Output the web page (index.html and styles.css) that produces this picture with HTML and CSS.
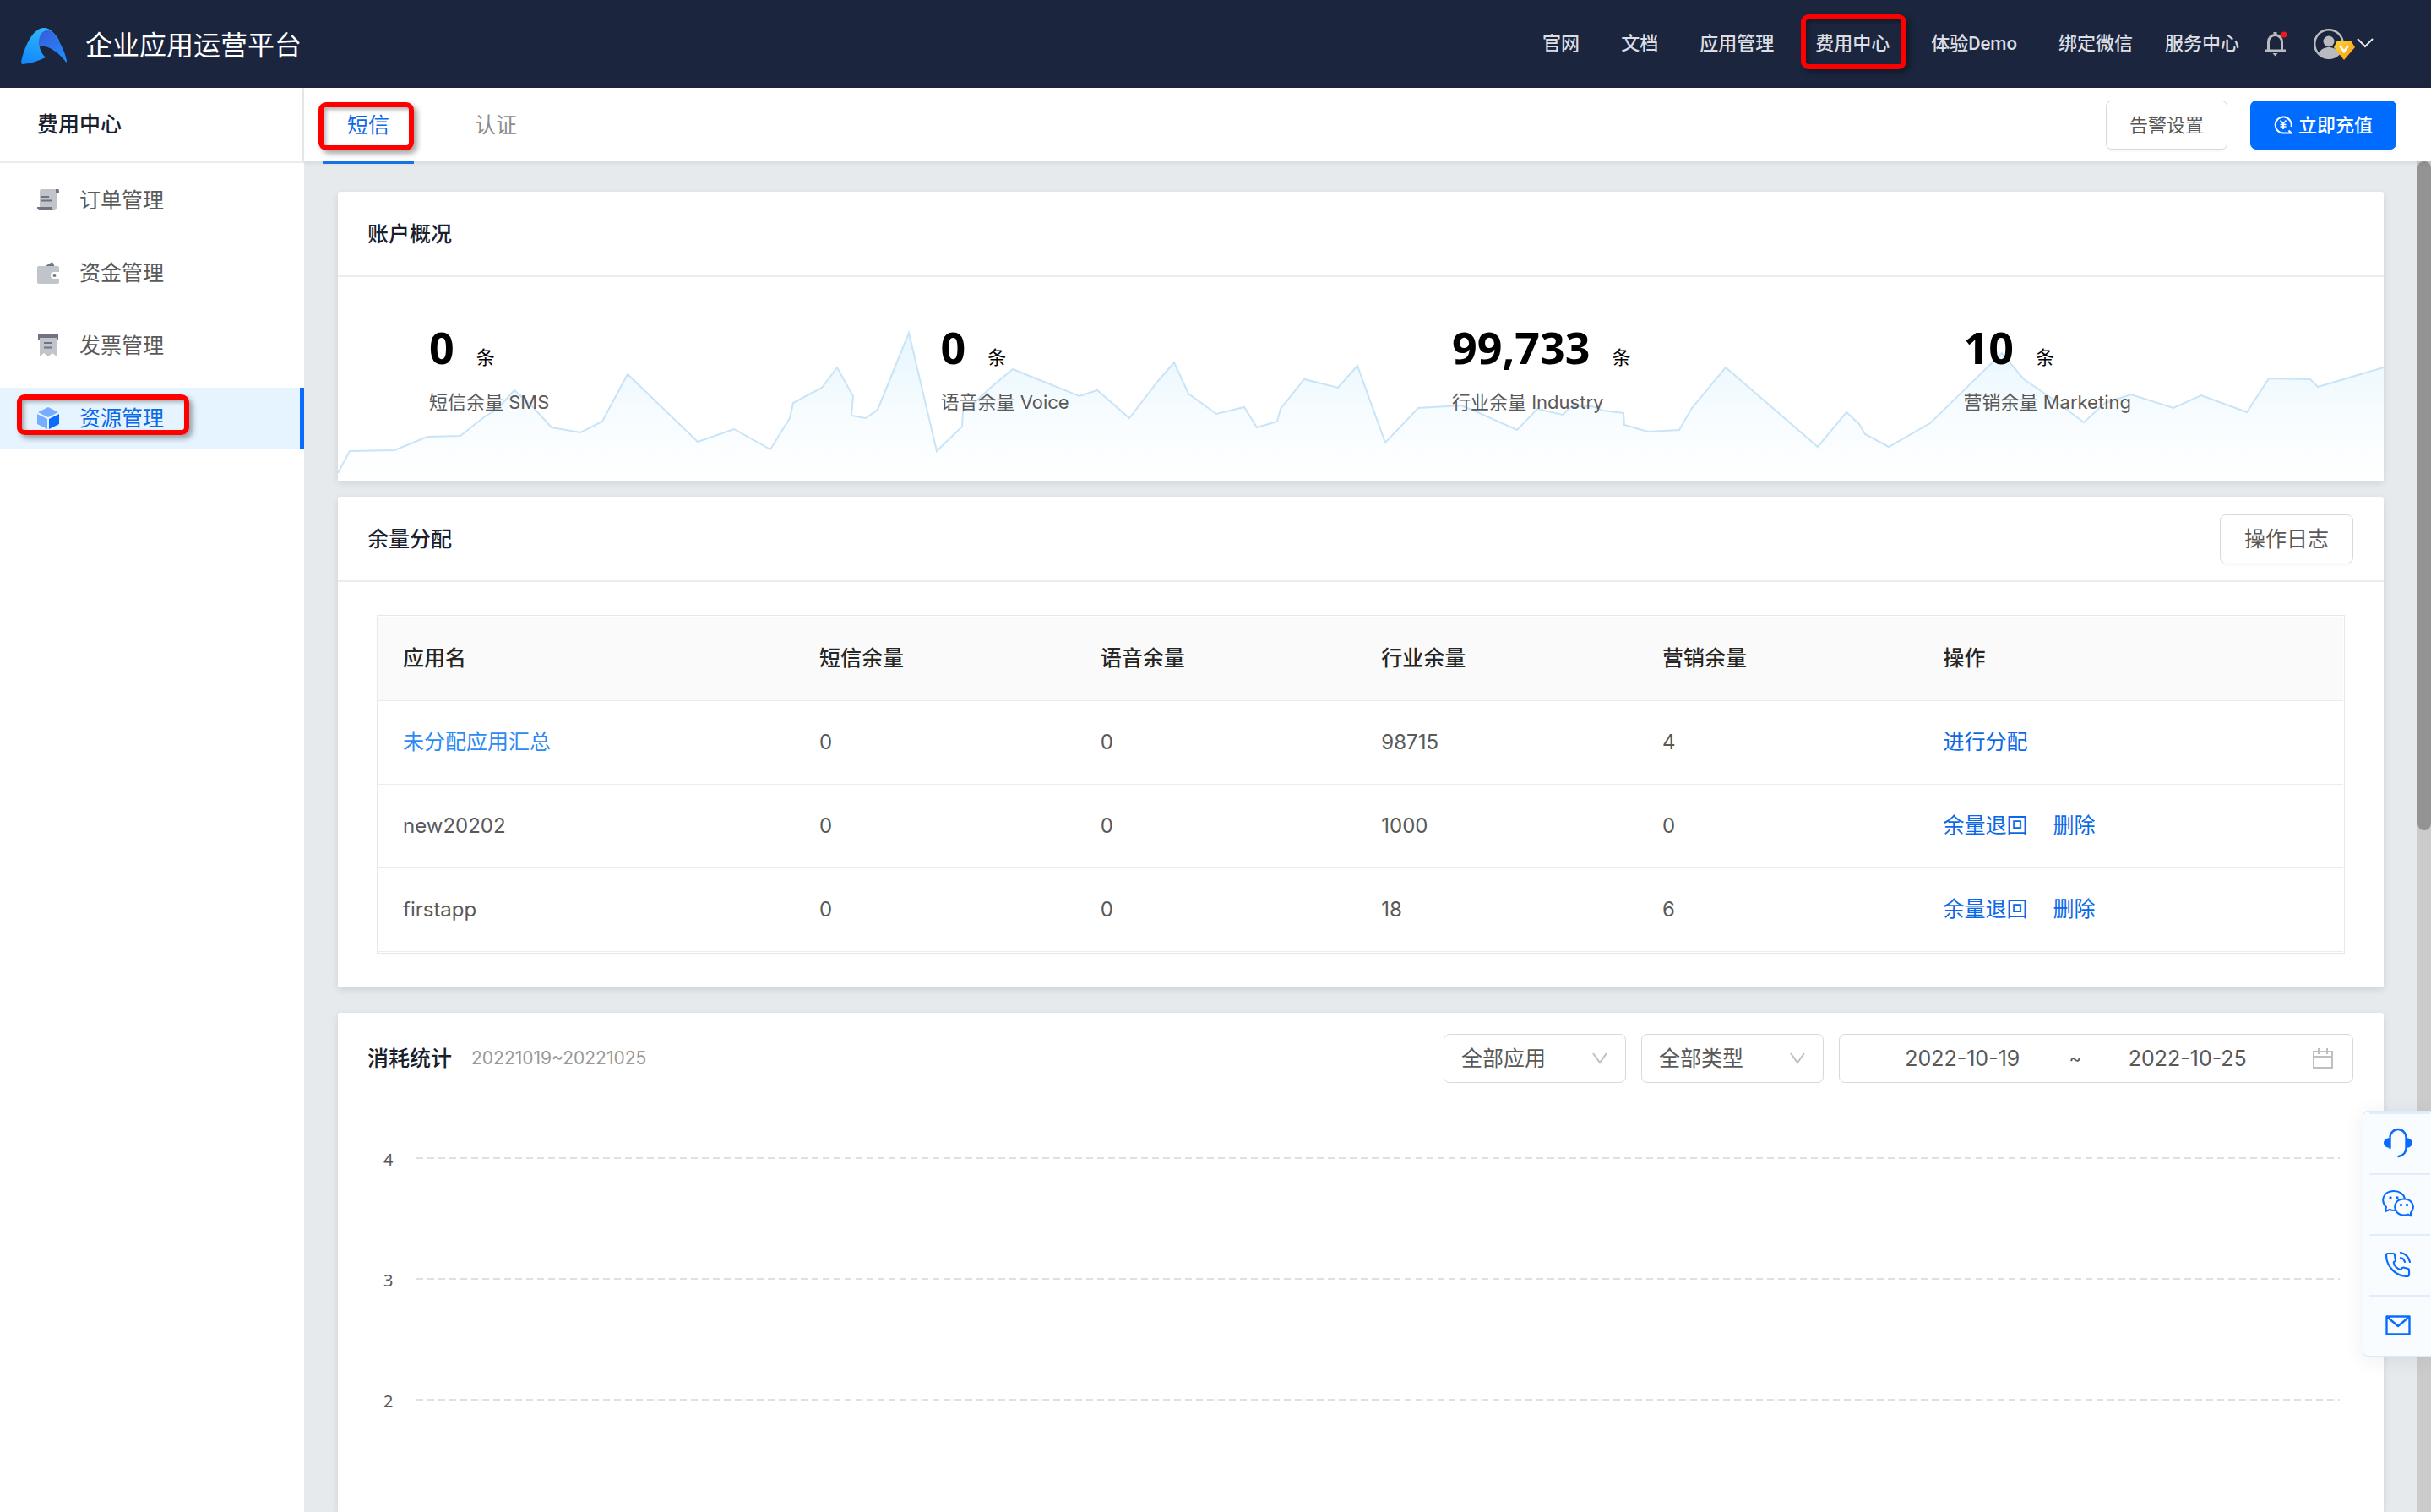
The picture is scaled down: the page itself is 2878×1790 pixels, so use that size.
FILE: index.html
```html
<!DOCTYPE html>
<html lang="zh-CN">
<head>
<meta charset="utf-8">
<title>企业应用运营平台</title>
<link rel="stylesheet" href="styles.css">
</head>
<body>
<header class="header">
  <a class="brand" href="#">
    <svg class="brand-logo" viewBox="0 0 54 43" aria-hidden="true">
      <defs>
        <linearGradient id="logo-left" x1="0.6" y1="0" x2="0.3" y2="1"><stop offset="0" stop-color="#2fb8fb"/><stop offset="1" stop-color="#1389fb"/></linearGradient>
        <linearGradient id="logo-right" x1="0.1" y1="0" x2="0.8" y2="1"><stop offset="0" stop-color="#3a5bdc"/><stop offset="1" stop-color="#1e8dfb"/></linearGradient>
      </defs>
      <path fill="url(#logo-left)" d="M0 41C3 25 13 0 27 0c8 0 14 8 18 15L22 22c0 5 4 10 7 13-8 4-18 7-27 8-1 0-2-1-2-2z"/>
      <path fill="url(#logo-right)" d="M21 21C20 11 24 3 31 3c4 0 7 2 9 5 6 9 12 20 14 31 0 2-1 2-2 0-7-9-18-18-31-18z"/>
    </svg>
    <span>企业应用运营平台</span>
  </a>
  <nav class="topnav">
    <a href="#">官网</a>
    <a href="#">文档</a>
    <a href="#">应用管理</a>
    <a class="marked marked-nav" href="#">费用中心</a>
    <a href="#">体验Demo</a>
    <a href="#">绑定微信</a>
  </nav>
  <a class="service" href="#">服务中心</a>
  <button class="icon-button bell" aria-label="通知">
    <svg viewBox="0 0 28 30" width="28" height="30" aria-hidden="true">
      <path d="M5.500 22V12.500a8 8 0 0 1 16 0V22" fill="none" stroke="#b9bbbf" stroke-width="3"/>
      <path d="M1 21.500h25v3H1zM10.500 26h6l-3 3.500zM11.500 1h4v4h-4z" fill="#b9bbbf"/>
      <circle cx="24" cy="4" r="3.500" fill="#f01818"/>
    </svg>
  </button>
  <button class="icon-button account" aria-label="账户">
    <svg viewBox="0 0 72 40" width="72" height="40" aria-hidden="true">
      <defs><linearGradient id="gem" x1="0" y1="0" x2="1" y2="1"><stop offset="0" stop-color="#ffd43a"/><stop offset="1" stop-color="#fb9a0b"/></linearGradient></defs>
      <circle cx="19" cy="20" r="16.800" fill="none" stroke="#b9bbbf" stroke-width="2.500"/>
      <circle cx="19" cy="17" r="6.500" fill="#b9bbbf"/>
      <path d="M7 32c2-6 7-8 12-8s10 2 12 8c-7 7-17 7-24 0z" fill="#b9bbbf"/>
      <path d="M29 16h16l5 8-13 15-12-15z" fill="url(#gem)"/>
      <path d="M32 22l5 7 5-7" fill="none" stroke="#fff" stroke-width="2.500"/>
      <path d="M53 14l9 9 9-9" fill="none" stroke="#e3e5e9" stroke-width="2"/>
    </svg>
  </button>
</header>

<div class="layout">
  <aside class="sidebar">
    <h1 class="sidebar-title">费用中心</h1>
    <nav class="menu">
      <a class="menu-item" href="#">
        <svg class="menu-icon" viewBox="0 0 26 26" aria-hidden="true">
          <path d="M5 0h20l-2 4v18q0 3-3 3H3V3q0-3 2-3z" fill="#c1c4ca"/>
          <path d="M22 0h3q1 0 1 4h-4zM1 21h17q-1 4 2 4H3q-3 0-3-4z" fill="#6d7482"/>
          <path d="M5 9h9M5 13.500h13" stroke="#6d7482" stroke-width="2"/>
        </svg>订单管理</a>
      <a class="menu-item" href="#">
        <svg class="menu-icon" viewBox="0 0 26 26" aria-hidden="true">
          <path d="M8 6l10-6 3 6z" fill="#6d7482"/>
          <path d="M2 5h22q2 0 2 2v5h-6a4 4 0 0 0 0 8h6v4q0 2-2 2H2q-2 0-2-2V7q0-2 2-2z" fill="#c1c4ca"/>
          <circle cx="20.500" cy="16" r="2" fill="#6d7482"/>
        </svg>资金管理</a>
      <a class="menu-item" href="#">
        <svg class="menu-icon" viewBox="0 0 26 26" aria-hidden="true">
          <path d="M1 0h24v7H1z" fill="#6d7482"/>
          <path d="M3 4h20v22l-5-4-5 4-5-4-5 4z" fill="#c1c4ca"/>
          <path d="M8 10h10M8 15.500h10" stroke="#6d7482" stroke-width="2"/>
        </svg>发票管理</a>
      <a class="menu-item active marked marked-menu" href="#">
        <svg class="menu-icon" viewBox="0 0 26 26" aria-hidden="true">
          <path d="M13 0l12 6-12 6L1 6z" fill="#75adff"/>
          <path d="M0 8l12 6v12L0 20z" fill="#75adff"/>
          <path d="M26 8v12l-12 6V14z" fill="#0a6cff"/>
        </svg>资源管理</a>
    </nav>
  </aside>

  <main class="main">
    <div class="toolbar">
      <nav class="tabs">
        <a class="tab active marked marked-tab" href="#">短信</a>
        <a class="tab" href="#">认证</a>
      </nav>
      <button class="button button-small">告警设置</button>
      <button class="button button-small button-primary">
        <svg viewBox="0 0 22 22" width="22" height="22" aria-hidden="true">
          <path d="M20.500 13A9.500 9.500 0 1 0 11 20.500h9.500l-3-3" fill="none" stroke="#fff" stroke-width="2"/>
          <path d="M7.500 5.500l3.500 4 3.500-4M11 9.500V16M7.500 10.500h7M7.500 13h7" fill="none" stroke="#fff" stroke-width="1.700"/>
        </svg>立即充值</button>
    </div>

    <div class="viewport">
      <div class="content">
        <section class="card">
          <div class="card-head"><h2>账户概况</h2></div>
          <div class="stats">
            <svg class="trend" viewBox="0 0 2422 241" preserveAspectRatio="none" aria-hidden="true">
              <defs><linearGradient id="trend-fill" x1="0" y1="0" x2="0" y2="1"><stop offset="0" stop-color="#e6f6fd"/><stop offset="0.550" stop-color="#f7fcff"/><stop offset="1" stop-color="#ffffff"/></linearGradient></defs>
              <path fill="url(#trend-fill)" d="M0 241V232L14 206 67 205 106 189 145 188 174 165 188 157 209 134 231 154 253 178 287 184 313 171 343 115 426 195 469 180 512 204 535 167 539 149 573 131 591 107 610 141 608 164 625 167 639 157 676 66 709 206 739 177 740 159 753 149 775 129 799 109 878 141 899 134 937 167 971 123 990 101 1007 138 1040 162 1073 154 1088 178 1112 171 1116 156 1144 121 1184 131 1207 105 1240 196 1279 155 1330 152 1347 159 1396 181 1420 156 1450 163 1461 153 1485 153 1498 158 1522 161 1523 175 1551 183 1588 181 1603 155 1643 107 1752 201 1786 160 1801 174 1808 186 1836 201 1885 173 1970 90 1996 121 2031 145 2067 172 2092 149 2123 139 2173 155 2206 140 2260 160 2286 120 2335 121 2344 130 2422 107V241z"/>
              <path fill="none" stroke="#c9e4f7" stroke-width="2" d="M0 232L14 206 67 205 106 189 145 188 174 165 188 157 209 134 231 154 253 178 287 184 313 171 343 115 426 195 469 180 512 204 535 167 539 149 573 131 591 107 610 141 608 164 625 167 639 157 676 66 709 206 739 177 740 159 753 149 775 129 799 109 878 141 899 134 937 167 971 123 990 101 1007 138 1040 162 1073 154 1088 178 1112 171 1116 156 1144 121 1184 131 1207 105 1240 196 1279 155 1330 152 1347 159 1396 181 1420 156 1450 163 1461 153 1485 153 1498 158 1522 161 1523 175 1551 183 1588 181 1603 155 1643 107 1752 201 1786 160 1801 174 1808 186 1836 201 1885 173 1970 90 1996 121 2031 145 2067 172 2092 149 2123 139 2173 155 2206 140 2260 160 2286 120 2335 121 2344 130 2422 107"/>
            </svg>
            <div class="stat"><p class="stat-value"><strong>0</strong><span>条</span></p><p class="stat-label">短信余量 SMS</p></div>
            <div class="stat"><p class="stat-value"><strong>0</strong><span>条</span></p><p class="stat-label">语音余量 Voice</p></div>
            <div class="stat"><p class="stat-value"><strong>99,733</strong><span>条</span></p><p class="stat-label">行业余量 Industry</p></div>
            <div class="stat"><p class="stat-value"><strong>10</strong><span>条</span></p><p class="stat-label">营销余量 Marketing</p></div>
          </div>
        </section>

        <section class="card">
          <div class="card-head"><h2>余量分配</h2><button class="button">操作日志</button></div>
          <div class="table-area">
            <div class="table-frame">
              <table class="table">
                <colgroup><col class="col-name"><col><col><col><col><col class="col-actions"></colgroup>
                <thead><tr><th>应用名</th><th>短信余量</th><th>语音余量</th><th>行业余量</th><th>营销余量</th><th>操作</th></tr></thead>
                <tbody>
                  <tr><td><a class="name-link" href="#">未分配应用汇总</a></td><td>0</td><td>0</td><td>98715</td><td>4</td><td><a href="#">进行分配</a></td></tr>
                  <tr><td>new20202</td><td>0</td><td>0</td><td>1000</td><td>0</td><td><a href="#">余量退回</a><a href="#">删除</a></td></tr>
                  <tr><td>firstapp</td><td>0</td><td>0</td><td>18</td><td>6</td><td><a href="#">余量退回</a><a href="#">删除</a></td></tr>
                </tbody>
              </table>
            </div>
          </div>
        </section>

        <section class="card card-chart">
          <div class="chart-head">
            <h2>消耗统计</h2>
            <span class="period">20221019~20221025</span>
            <div class="select">
              <select aria-label="应用"><option>全部应用</option></select>
              <svg viewBox="0 0 18 14" width="18" height="14" aria-hidden="true"><path d="M1 1l8 11 8-11" fill="none" stroke="#bfbfbf" stroke-width="2"/></svg>
            </div>
            <div class="select">
              <select aria-label="类型"><option>全部类型</option></select>
              <svg viewBox="0 0 18 14" width="18" height="14" aria-hidden="true"><path d="M1 1l8 11 8-11" fill="none" stroke="#bfbfbf" stroke-width="2"/></svg>
            </div>
            <div class="date-range">
              <input type="text" value="2022-10-19" aria-label="开始日期">
              <span>~</span>
              <input type="text" value="2022-10-25" aria-label="结束日期">
              <svg viewBox="0 0 24 24" width="24" height="24" aria-hidden="true"><path d="M1 4h22v19H1zM1 10h22M7 0v7M17 0v7" fill="none" stroke="#bfbfbf" stroke-width="2"/></svg>
            </div>
          </div>
          <div class="chart">
            <div class="gridline"><span>4</span></div>
            <div class="gridline"><span>3</span></div>
            <div class="gridline"><span>2</span></div>
          </div>
        </section>
      </div>
      <div class="scrollbar"><div class="scrollbar-thumb"></div></div>
    </div>
  </main>
</div>

<div class="dock">
  <button aria-label="在线客服">
    <svg viewBox="0 0 34 36" width="34" height="36" aria-hidden="true"><path d="M7.500 24V12a9.500 10 0 0 1 19 0v12c0 6-4 9-9 10" fill="none" stroke="#0a6cff" stroke-width="2.400" stroke-linecap="round"/><path d="M8 12v12c-5 0-8-3-8-6s3-6 8-6zM26 12c5 0 8 3 8 6s-3 6-8 6z" fill="#0a6cff"/></svg>
  </button>
  <button aria-label="微信">
    <svg viewBox="0 0 38 32" width="38" height="32" fill="none" stroke="#0a6cff" stroke-width="2" stroke-linejoin="round" aria-hidden="true"><path d="M16 24c-3 0-5 0-7-1l-5 2 1-5C-2 13 1 1 14 1c7 0 12 4 13 9"/><path d="M26 10.500c-15 0-14 19 0 19 2 0 4 0 5-1l3 2v-4c6-6 2-16-8-16z"/><g fill="#0a6cff" stroke="none"><circle cx="10" cy="9" r="1.700"/><circle cx="18" cy="9" r="1.700"/><circle cx="22.500" cy="17.500" r="1.700"/><circle cx="29.500" cy="17.500" r="1.700"/></g></svg>
  </button>
  <button aria-label="电话">
    <svg viewBox="0 0 30 30" width="30" height="30" fill="none" stroke="#0a6cff" stroke-width="2.200" stroke-linejoin="round" stroke-linecap="round" aria-hidden="true"><path d="M3 2h6q2 0 2 2l1 6q0 1-2 2c-1 4 5 9 8 9l2-2q1-1 3 0l4 1q1 0 1 2v5q0 2-2 2C12 29 1 17 1 4q0-2 2-2z"/><path d="M18 1q9 2 11 11M18 7q4 1 5 5"/></svg>
  </button>
  <button aria-label="邮件">
    <svg viewBox="0 0 30 24" width="30" height="24" fill="none" stroke="#0a6cff" stroke-width="2.400" stroke-linejoin="round" aria-hidden="true"><path d="M1.500 1.500h27v21h-27zM2 2l13 11L28 2"/></svg>
  </button>
</div>
</body>
</html>
```

FILE: styles.css
```css
*, *::before, *::after { box-sizing: border-box; }

body {
  margin: 0;
  height: 100vh;
  display: flex;
  flex-direction: column;
  overflow: hidden;
  background: #e6eaed;
  color: #595959;
  font: 25px/36px Inter, "Noto Sans CJK SC", sans-serif;
}

a { color: #0a69e8; text-decoration: none; }
h1, h2, p { margin: 0; }
h2 { font-size: 25px; font-weight: 500; color: #17202c; }
button, input, select { font: inherit; color: inherit; }
button { cursor: pointer; }
svg { display: block; flex: none; }

/* Header */
.header {
  flex: none;
  height: 104px;
  padding: 0 68px 0 25px;
  display: flex;
  align-items: center;
  background: #1b253d;
}
.header a { color: #dcdee3; }
.header .brand {
  display: flex;
  align-items: center;
  gap: 22px;
  margin-right: auto;
  padding-top: 4px;
  color: #fff;
  font-size: 32px;
}
.brand-logo { width: 54px; height: 43px; }
.topnav { display: flex; gap: 49px; }
.topnav a, .service {
  height: 104px;
  font: 500 22px/104px Roboto, "Noto Sans CJK SC", sans-serif;
}
.service { margin-left: 38px; }
.icon-button { padding: 0; border: 0; background: none; }
.bell { margin-left: 29px; }
.account { margin-left: 30px; }

/* Red call-out frames */
.marked { position: relative; }
.marked::after {
  content: "";
  position: absolute;
  border: 6px solid #f00;
  border-radius: 9px;
  box-shadow: 4px 4px 6px rgba(0, 0, 0, .35), inset 3px 3px 5px rgba(0, 0, 0, .3);
}
.marked-nav::after { inset: 17px -20px 22px -17px; }
.marked-tab::after { inset: 17px 0 13px -5px; }
.marked-menu::after { inset: 8px auto 16px 20px; width: 204px; }

/* Page frame */
.layout { flex: 1; min-height: 0; display: flex; }
.sidebar { flex: none; width: 360px; background: #fff; }
.sidebar-title {
  height: 89px;
  padding-left: 44px;
  border-right: 2px solid #ececec;
  border-bottom: 2px solid #ececec;
  color: #17202c;
  font-size: 25px;
  line-height: 87px;
  font-weight: 500;
}
.menu { display: flex; flex-direction: column; gap: 14px; padding-top: 8px; }
.menu-item {
  height: 72px;
  padding: 0 0 1px 44px;
  display: flex;
  align-items: center;
  gap: 24px;
  color: #595959;
}
.menu-item.active { background: #e6f4ff; color: #0a69e8; border-right: 5px solid #0a6cff; }
.menu-icon { width: 26px; height: 26px; }

.main { flex: 1; min-width: 0; display: flex; flex-direction: column; }
.toolbar {
  position: relative;
  flex: none;
  height: 87px;
  padding: 0 41px 0 22px;
  display: flex;
  align-items: center;
  gap: 27px;
  background: #fff;
  box-shadow: 0 2px 6px rgba(0, 0, 0, .08);
}
.tabs { display: flex; gap: 43px; margin-right: auto; }
.tab { height: 90px; margin-bottom: -3px; padding: 0 29px; line-height: 88px; color: #8c8c8c; }
.tab.active { color: #0a69e8; border-bottom: 3px solid #1473e6; }

.button {
  height: 58px;
  padding: 0 28px;
  border: 1px solid #d9d9d9;
  border-radius: 7px;
  background: #fff;
  box-shadow: 0 3px 0 rgba(0, 0, 0, .02);
}
.button-small { padding: 0 27px; font-size: 22px; }
.button-primary {
  display: flex;
  align-items: center;
  gap: 7px;
  border-color: #006cff;
  background: #006cff;
  color: #fff;
  font-weight: 500;
}

.viewport { flex: 1; min-height: 0; display: flex; overflow: hidden; }
.content {
  flex: 1;
  min-width: 0;
  display: flex;
  flex-direction: column;
  padding: 36px 40px 0;
}
.scrollbar { flex: none; width: 16px; background: #cbcbcb; }
.scrollbar-thumb { height: 49.5%; border-radius: 8px; background: #939393; }

/* Cards */
.card {
  flex: none;
  margin-bottom: 19px;
  background: #fff;
  border-radius: 3px;
  box-shadow: 0 3px 8px rgba(0, 0, 0, .1);
}
.card-head {
  height: 101px;
  padding: 0 36px 0 35px;
  display: flex;
  align-items: center;
  justify-content: space-between;
  border-bottom: 2px solid #ececec;
}

.stats {
  position: relative;
  height: 241px;
  display: grid;
  grid-template-columns: repeat(4, 1fr);
}
.trend { position: absolute; inset: 0; width: 100%; height: 100%; }
.stat { position: relative; padding: 53px 0 0 108px; }
.stat-value { display: flex; align-items: baseline; gap: 26px; color: #000; font-size: 22px; line-height: 60px; }
.stat-value strong { font: 700 52px/60px "Open Sans", sans-serif; }
.stat-label { margin-top: 7px; font-size: 22px; line-height: 32px; }

.table-area { padding: 39px 46px 40px; }
.table-frame { padding: 1px; border: 1px solid #e8e8e8; }
.table { width: 100%; table-layout: fixed; border-collapse: collapse; }
.table col { width: 14.300%; }
.table .col-name { width: 21.200%; }
.table .col-actions { width: 21.600%; }
.table th, .table td {
  height: 99px;
  padding: 0 29px;
  border-bottom: 1px solid #ececec;
  text-align: left;
}
.table th { background: #fafafa; color: #262626; font-weight: 500; }
.table td { font-size: 24px; }
.table td a { font-size: 25px; margin-right: 30px; }
.table .name-link { color: #2b8af5; }

/* Consumption chart */
.card-chart { flex: 1; margin: 11px 0 0; border-radius: 3px 3px 0 0; }
.chart-head { height: 109px; padding: 0 36px 0 35px; display: flex; align-items: center; gap: 18px; }
.period { margin: 0 auto 0 5px; font-size: 21px; color: #999; }
.select {
  display: grid;
  width: 216px;
  height: 58px;
  align-items: center;
}
.select select {
  grid-area: 1 / 1;
  width: 100%;
  height: 100%;
  padding: 0 20px;
  border: 1px solid #d9d9d9;
  border-radius: 7px;
  background: #fff;
  appearance: none;
}
.select svg { grid-area: 1 / 1; justify-self: end; margin-right: 22px; pointer-events: none; }
.date-range {
  width: 609px;
  height: 58px;
  padding: 0 23px 0 19px;
  display: flex;
  align-items: center;
  border: 1px solid #d9d9d9;
  border-radius: 7px;
}
.date-range input {
  flex: 1;
  min-width: 0;
  padding: 0;
  border: 0;
  background: none;
  text-align: center;
}
.date-range span { width: 14px; font-size: 22px; }
.date-range svg { margin-left: 22px; }

.chart { padding: 47px 52px 0 54px; display: flex; flex-direction: column; }
.gridline {
  height: 143px;
  display: flex;
  align-items: flex-start;
  gap: 28px;
  font: 20px/36px "Noto Sans", sans-serif;
}
.gridline::after {
  content: "";
  flex: 1;
  height: 2px;
  margin-top: 15px;
  background: repeating-linear-gradient(90deg, #e0e0e0 0 8px, transparent 8px 13px);
}

/* Floating contact dock */
.dock {
  position: fixed;
  right: 0;
  bottom: 184px;
  width: 81px;
  padding: 1px 1px 0 7px;
  border: 1px solid #d9ecfb;
  border-right: 0;
  border-radius: 6px 0 0 6px;
  background: #f8fcff;
  box-shadow: 0 4px 24px rgba(30, 40, 90, .08);
}
.dock button {
  width: 100%;
  height: 72px;
  padding: 0 4px 2px 0;
  display: flex;
  align-items: center;
  justify-content: center;
  border: 0;
  border-top: 2px solid #e1edfd;
  background: none;
}
```
